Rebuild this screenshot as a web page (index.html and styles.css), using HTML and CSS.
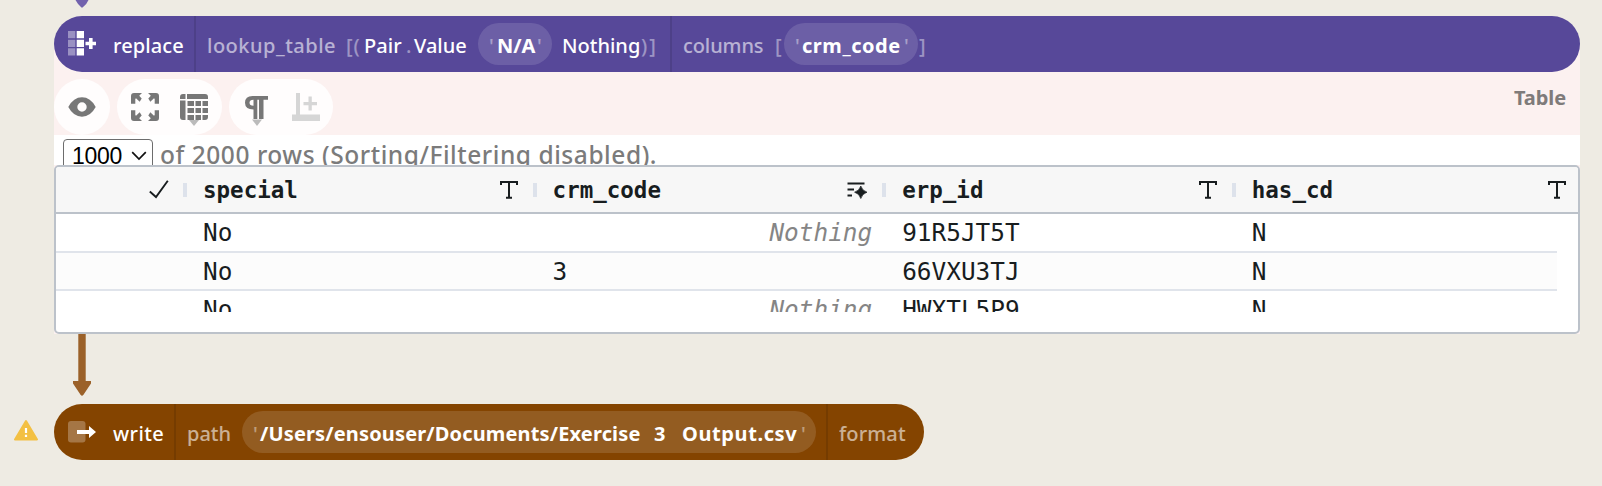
FILE: index.html
```html
<!DOCTYPE html>
<html lang="en">
<head>
<meta charset="utf-8">
<title>Workflow</title>
<link rel="stylesheet" href="styles.css">
</head>
<body>
<main class="graph">
  <svg class="edge-in" width="56" height="16" viewBox="0 0 56 16"><path d="M21.5 0h13Q33 4 28.800 7.300q-.8.7-1.600 0Q23.500 4 21.500 0z" fill="#7262ad"/></svg>

  <section class="node replace">
    <svg class="node-icon" width="30" height="26" viewBox="0 0 30 26">
      <g fill="#fff"><path opacity=".4" d="M0 0h7.300v7.300H0zM0 8.700h7.300v7.300H0zM0 17.300h7.300v7.300H0z"/><path d="M8.700 0H16v7.300H8.700zM8.700 8.700H16v7.300H8.700zM8.700 17.300H16v7.300H8.700zM21 7h3.600v3.700H28v3.600h-3.400V18H21v-3.700h-3.500v-3.600H21z"/></g>
    </svg>
    <span class="name w-replace">replace</span>
    <div class="arg arg-lookup">
      <span class="label w-lookup">lookup_table</span>
      <span class="punct w-open">[(</span>
      <span class="w-pair">Pair</span>
      <span class="punct w-dot">.</span>
      <span class="w-value">Value</span>
      <span class="literal l-na"><i>'</i><b>N/A</b><i>'</i></span>
      <span class="w-nothing">Nothing</span>
      <span class="punct w-close">)]</span>
    </div>
    <div class="arg">
      <span class="label w-columns">columns</span>
      <span class="punct w-bracket">[</span>
      <span class="literal l-crm"><i>'</i><b>crm_code</b><i>'</i></span>
      <span class="punct">]</span>
    </div>
  </section>

  <section class="visualization">
    <div class="toolbar">
      <div class="tools one">
        <svg width="28" height="20" viewBox="0 0 28 20"><path fill="#777" fill-rule="evenodd" d="M.3 10Q5.500.3 14 .3T27.700 10Q22.500 19.700 14 19.700T.3 10zM14 5.300a4.700 4.700 0 1 0 0 9.400 4.700 4.700 0 0 0 0-9.400z"/></svg>
      </div>
      <div class="tools two">
        <svg width="28" height="28" viewBox="0 0 28 28"><g fill="#777"><path id="corner" d="M3 0h8L8.200 2.800l2.500 2.700-2 3.200-3.700-3.400L4.300 6v4.800H0V3Q0 0 3 0z"/><use href="#corner" transform="matrix(-1 0 0 1 28 0)"/><use href="#corner" transform="matrix(1 0 0 -1 0 28)"/><use href="#corner" transform="matrix(-1 0 0 -1 28 28)"/></g></svg>
        <svg width="28" height="33" viewBox="0 0 28 33"><path fill="#777" d="M3 1h22q3 0 3 3v2H7V1 6H0V4q0-3 3-3zM0 7.500h5.500V27H3q-3 0-3-3zM7.500 8H14v5H7.500zM15.500 8h5.500v5h-5.500zM22.500 8H28v5h-5.500zM7.500 15H14v5H7.500zM15.500 15h5.500v5h-5.500zM22.500 15H28v5h-5.500zM7.500 22H14v5H7.500zM15.500 22h5.500v5h-5.500zM22.500 22H28v2q0 3-3 3h-2.500z"/><path fill="#fff" d="M5.500 1H7v5H5.500z"/><path fill="#bbb" d="M9 27h10l-5 6z"/></svg>
      </div>
      <div class="tools three">
        <svg width="24" height="31" viewBox="0 0 24 31"><path fill="#777" d="M7.500 0H23v3.800h-4.500V23H14V3.800h-1.700V23H8.500V13.500Q0 13.500 0 6.800 0 0 7.500 0zM8.500 3.800Q4.500 3.800 4.500 6.800t4 3z" fill-rule="evenodd"/><path fill="#bbb" d="M7 23.500h10L12 30z"/></svg>
        <svg width="28" height="29" viewBox="0 0 28 29"><path fill="#d6d6d6" d="M4 0h4v21.500h20V28H0v-6.500h4zM16.500 3.500h3.300V9H25v3.300h-5.200V17.500h-3.300v-5.200h-5V9h5z"/></svg>
      </div>
      <span class="type-name">Table</span>
    </div>

    <div class="status">
      <span class="row-limit">1000<svg width="16" height="10" viewBox="0 0 16 10"><path d="M1.200 1.200 8 8l6.800-6.800" fill="none" stroke="#111" stroke-width="1.700"/></svg></span>
      <span class="row-count">of 2000 rows (Sorting/Filtering disabled).</span>
    </div>

    <div class="table">
      <div class="row head">
        <div class="cell first"><svg width="20" height="19" viewBox="0 0 20 19"><path d="M.8 11.500 7 17 18.800.8" fill="none" stroke="#181d1f" stroke-width="1.900"/></svg></div>
        <div class="cell"><span>special</span><svg width="18" height="18" viewBox="0 0 18 18"><path d="M1 4V1h16v3M9 1v15.800M6 16.800h6" fill="none" stroke="#181d1f" stroke-width="2"/></svg></div>
        <div class="cell"><span>crm_code</span><svg width="20" height="18" viewBox="0 0 20 18"><path d="M.5 2.500h17M.5 8.500H7M.5 14.500h4.500" stroke="#181d1f" stroke-width="2"/><path d="M13.800 5q1.400 4.800 6.200 6.200-4.800 1.400-6.200 6.300-1.400-4.900-6.200-6.300Q12.400 9.800 13.800 5z" fill="#181d1f" stroke="#181d1f" stroke-width=".7"/></svg></div>
        <div class="cell"><span>erp_id</span><svg width="18" height="18" viewBox="0 0 18 18"><path d="M1 4V1h16v3M9 1v15.800M6 16.800h6" fill="none" stroke="#181d1f" stroke-width="2"/></svg></div>
        <div class="cell"><span>has_cd</span><svg width="18" height="18" viewBox="0 0 18 18"><path d="M1 4V1h16v3M9 1v15.800M6 16.800h6" fill="none" stroke="#181d1f" stroke-width="2"/></svg></div>
      </div>
      <div class="rows">
        <div class="row"><div class="cell first"></div><div class="cell">No</div><div class="cell nothing">Nothing</div><div class="cell">91R5JT5T</div><div class="cell">N</div></div>
        <div class="row odd"><div class="cell first"></div><div class="cell">No</div><div class="cell">3</div><div class="cell">66VXU3TJ</div><div class="cell">N</div></div>
        <div class="row"><div class="cell first"></div><div class="cell">No</div><div class="cell nothing">Nothing</div><div class="cell">HWXTL5P9</div><div class="cell">N</div></div>
      </div>
    </div>
  </section>

  <svg class="edge-out" width="56" height="70" viewBox="0 0 56 70"><path d="M24.300 0h7.400v47H37v2.500L29.300 61q-1.300 1.300-2.600 0L19 49.500V47h5.300z" fill="#9b6129"/></svg>

  <div class="write-line">
    <svg class="warning" width="26" height="22" viewBox="0 0 26 22"><path d="M13 2 24 20.500H2z" fill="#f3c043" stroke="#f3c043" stroke-width="2" stroke-linejoin="round"/><path d="M13 9v5M13 15.700v2.300" stroke="#fff" stroke-width="2.200"/></svg>
    <section class="node write">
      <svg class="node-icon" width="30" height="22" viewBox="0 0 30 22"><rect width="17.500" height="21.500" rx="3" fill="#fff" opacity=".27"/><path d="M9 9h12V5l7 6-7 6v-4H9z" fill="#fff"/></svg>
      <span class="name w-write">write</span>
      <div class="arg arg-path">
        <span class="label w-path">path</span>
        <span class="literal l-path"><i>'</i><b class="dir">/Users/ensouser/Documents/Exercise</b><b class="num">3</b><b class="file">Output.csv</b><i>'</i></span>
      </div>
      <div class="arg"><span class="label w-format">format</span></div>
    </section>
  </div>
</main>
</body>
</html>
```

FILE: styles.css
```css
* { box-sizing: border-box; }
body { margin: 0; background: #eeebe3; }
svg { display: block; flex: none; }

.graph {
  width: 1602px;
  height: 486px;
  overflow: hidden;
  padding-left: 54px;
  font: 500 20px/28px "Noto Sans", sans-serif;
}

/* Nodes */
.node {
  position: relative;
  display: flex;
  align-items: center;
  height: 56px;
  border-radius: 28px;
  color: #fff;
  white-space: nowrap;
}
.node span { flex: none; }
.replace { width: 1526px; background: #574899; }
.write { width: 869.500px; background: #844400; }
.node-icon { margin-left: 14px; }
.name { padding-top: 3px; margin-left: 15px; letter-spacing: .1px; }
.arg {
  display: flex;
  align-items: center;
  align-self: stretch;
  padding-left: 11px;
  border-left: 2px solid rgba(0, 0, 0, .11);
}
.arg > span:not(.literal) { padding-top: 3px; }
.label { opacity: .58; }
.punct { opacity: .42; }
.literal {
  display: flex;
  align-items: center;
  height: 42px;
  border-radius: 21px;
  background: rgba(255, 255, 255, .13);
  padding-top: 3px;
}
.literal i { font-style: normal; opacity: .4; width: 7px; }

.w-replace { width: 81px; }
.arg-lookup { width: 476px; }
.w-lookup { width: 139px; letter-spacing: .5px; }
.w-open { width: 18px; letter-spacing: 1px; }
.w-pair { width: 42px; letter-spacing: .1px; }
.w-dot { width: 8px; }
.w-value { width: 64px; }
.l-na { width: 74px; padding-left: 11px; }
.l-na b { width: 41px; padding-left: 1px; }
.w-nothing { width: 79px; margin-left: 10px; }
.w-close { letter-spacing: 2px; }
.w-columns { width: 92px; letter-spacing: -.1px; }
.w-bracket { width: 9px; }
.l-crm { width: 134px; padding-left: 11px; margin-right: 1px; }
.l-crm b { width: 102px; letter-spacing: .55px; }
.w-write { width: 61px; letter-spacing: .4px; }
.arg-path { width: 652px; }
.w-path { width: 55px; }
.l-path { width: 574px; padding-left: 11px; }
.l-path .dir { width: 394px; letter-spacing: .15px; }
.l-path .num { width: 28px; }
.l-path .file { width: 119px; letter-spacing: .6px; }
.w-format { letter-spacing: .15px; }

/* Visualization panel */
.visualization {
  width: 1526px;
  margin-top: -28px;
  padding-top: 28px;
  background: #fcf1f0;
}
.toolbar { display: flex; height: 63px; padding-top: 7px; }
.tools {
  display: flex;
  align-items: flex-start;
  height: 56px;
  border-radius: 28px;
  background: #fffdfd;
}
.one { width: 56px; padding: 18px 0 0 14px; }
.two { width: 105px; margin-left: 7px; padding: 14px 0 0 14px; gap: 21px; }
.three { width: 104px; margin-left: 7px; padding: 14px 0 0 16px; gap: 23px; }
.three svg:first-child { margin-top: 3px; }
.type-name {
  margin: 5px 14px 0 auto;
  color: #7f7b7a;
  font-weight: 700;
  letter-spacing: -.1px;
}

.status {
  display: flex;
  height: 30px;
  overflow: hidden;
  padding: 4px 0 0 9px;
  background: #fff;
  white-space: nowrap;
}
.row-limit {
  display: flex;
  align-items: center;
  gap: 9px;
  flex: none;
  width: 90px;
  height: 34px;
  padding-left: 8px;
  border: 1.500px solid #6d6d6d;
  border-radius: 4px;
  color: #000;
  font: 23px/32px "Liberation Sans", sans-serif;
  letter-spacing: -.3px;
}
.row-count {
  margin-left: 7px;
  color: #7b7b7b;
  font-size: 24.500px;
  line-height: 31px;
  letter-spacing: .55px;
}

/* Data table */
.table {
  height: 169px;
  border: 2px solid #bcc2ca;
  border-radius: 5px;
  background: #fff;
  overflow: hidden;
  color: #181d1f;
  font: 24.400px/38px "DejaVu Sans Mono", monospace;
}
.row {
  display: grid;
  grid-template-columns: 129px repeat(4, 349.600px);
}
.rows { width: 1501px; height: 98px; overflow: hidden; }
.rows .row { height: 38.600px; border-bottom: 2px solid #e0e4eb; }
.rows .odd { background: #fcfcfc; }
.cell { padding-left: 18px; }
.nothing { padding-right: 12px; text-align: right; font-style: italic; color: #858585; }
.head {
  height: 47px;
  border-bottom: 2px solid #bcc2ca;
  background: #f7f7f7;
  font-weight: 700;
  font-size: 22.500px;
}
.head .cell {
  display: flex;
  align-items: center;
  justify-content: space-between;
  padding: 0 17px 0 18px;
  background: linear-gradient(#dde2eb, #dde2eb) right center / 2px 14px no-repeat, linear-gradient(#dde2eb, #dde2eb) left center / 2px 14px no-repeat;
}
.head .first { justify-content: flex-end; padding-right: 16px; background: linear-gradient(#dde2eb, #dde2eb) right center / 2px 14px no-repeat; }

.write-line { display: flex; align-items: center; margin-left: -54px; }
.warning { margin: -4px 15px 0 13px; }
```
